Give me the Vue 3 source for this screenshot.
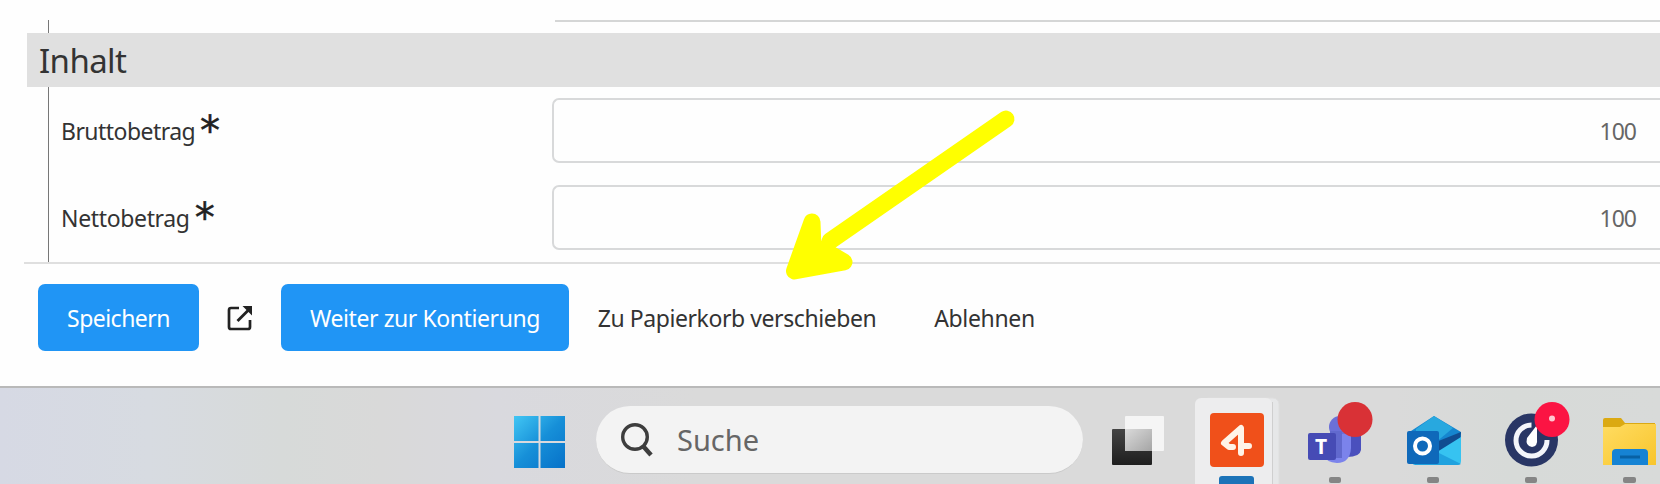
<template>
	<div class="screen">
		<main class="form">
			<div class="previous-row">
				<div class="previous-field"></div>
			</div>
			<h2 class="section-title"><span>Inhalt</span></h2>
			<div class="fields">
				<div class="field" v-for="item in fields" :key="item.label">
					<label class="label">
						<span :class="item.name">{{ item.label }}</span>
						<span class="required">*</span>
					</label>
					<div class="input"><span>{{ item.value }}</span></div>
				</div>
			</div>
			<footer class="actions">
				<button class="btn primary save"><span>Speichern</span></button>
				<button class="btn open">
					<svg width="28" height="28" viewBox="0 0 28 28">
						<path d="M13 4H5Q3 4 3 6V23Q3 25 5 25H22Q24 25 24 23V16" fill="none" stroke="#222" stroke-width="2.7" />
						<path d="M11.500 17L23 5.500" stroke="#222" stroke-width="2.800" />
						<path d="M16.500 2H26V11.500Z" fill="#222" />
					</svg>
				</button>
				<button class="btn primary next"><span>Weiter zur Kontierung</span></button>
				<button class="btn trash"><span>Zu Papierkorb verschieben</span></button>
				<button class="btn reject"><span>Ablehnen</span></button>
			</footer>
		</main>

		<nav class="taskbar">
			<svg class="start" width="53" height="54" viewBox="0 0 53 54">
				<defs>
					<linearGradient id="win" x1="0" y1="0" x2="53" y2="54" gradientUnits="userSpaceOnUse">
						<stop offset="0" stop-color="#43c8f5" />
						<stop offset="0.5" stop-color="#168fd8" />
						<stop offset="1" stop-color="#0670c8" />
					</linearGradient>
				</defs>
				<path d="M1 1H25.500V26H1ZM27.500 1H52V26H27.500ZM1 28H25.500V53H1ZM27.500 28H52V53H27.500Z" fill="url(#win)" />
			</svg>
			<div class="search">
				<svg width="34" height="36" viewBox="0 0 34 36">
					<circle cx="15" cy="15" r="12.300" fill="none" stroke="#3d3d3d" stroke-width="3.400" />
					<path d="M23 24L31 33" stroke="#3d3d3d" stroke-width="4.500" />
				</svg>
				<span>Suche</span>
			</div>
			<div class="apps">
				<svg class="app" viewBox="0 0 98 98">
					<defs>
						<linearGradient id="tv" x1="0" y1="0" x2="0" y2="1">
							<stop offset="0" stop-color="#444" />
							<stop offset="1" stop-color="#1e1e1e" />
						</linearGradient>
						<linearGradient id="glass" x1="0" y1="0" x2="1" y2="1">
							<stop offset="0" stop-color="#dadada" />
							<stop offset="1" stop-color="#a5a5a5" />
						</linearGradient>
					</defs>
					<rect x="35" y="30" width="39" height="35" rx="1" fill="#f5f5f5" />
					<rect x="22" y="43" width="40" height="36" rx="1" fill="url(#tv)" />
					<rect x="35" y="43" width="27" height="22" fill="url(#glass)" />
				</svg>

				<svg class="app" viewBox="0 0 98 98">
					<rect x="14" y="12" width="77" height="92" rx="6" fill="#e6e7e8" stroke="#dedede" />
					<rect x="7" y="12" width="77" height="92" rx="6" fill="#ededee" />
					<path d="M84.500 16V98" stroke="#cfcfcf" />
					<rect x="22" y="27" width="54" height="54" rx="4" fill="#f0501a" />
					<path class="four" d="M45 61L41 61L36 57L53 42V67M53 60H61" />
					<rect x="31" y="90" width="35" height="12" rx="3" fill="#1c73b8" />
				</svg>

				<svg class="app" viewBox="0 0 98 98">
					<circle cx="54" cy="41" r="11" fill="#6b70d8" />
					<path d="M61 46H75V64Q74 71 61 71Z" fill="#4a50bd" />
					<path d="M37 48H65V62Q64 77 51 77Q40 76 37 69Z" fill="#7b83eb" />
					<path d="M44 45H56V72H44Z" fill="#6169ce" />
					<rect x="22" y="47" width="28" height="27" rx="2" fill="#464bb5" />
					<text x="35" y="68" class="glyph" font-size="21">T</text>
					<circle cx="69" cy="33.500" r="17.500" fill="#d93136" />
					<rect class="running" x="43" y="91" width="12" height="6" rx="2" />
				</svg>

				<svg class="app" viewBox="0 0 98 98">
					<path d="M27 45L50 30L77 46V65H27Z" fill="#1686cf" />
					<path d="M32 43L50 30L69 42L51 57H32Z" fill="#28a8df" />
					<path d="M52 56L77 46L76 53L53 67Z" fill="#104d91" />
					<path d="M53 66L77 51V75Q77 79 73 79H31Q27 79 27 72H48Z" fill="#36c3f1" />
					<path d="M53 66L77 78Q75 79 73 79H31L27 74H48Z" fill="#20a2df" />
					<rect x="23" y="45" width="32" height="33" rx="2" fill="#0f69ba" />
					<circle cx="38.500" cy="60" r="7.500" fill="none" stroke="#fff" stroke-width="4" />
					<rect class="running" x="43" y="91" width="12" height="6" rx="2" />
				</svg>

				<svg class="app" viewBox="0 0 98 98">
					<circle cx="49.500" cy="54" r="26.500" fill="#293665" />
					<path d="M49.500 39A15.500 15.500 0 1 0 65 54" fill="none" stroke="#f4f5fa" stroke-width="5" />
					<path d="M55 39L45 52Q43 60 50 61Q56 60 55 53Z" fill="#fff" />
					<circle cx="70" cy="33.500" r="17.500" fill="#fb1443" />
					<circle cx="70" cy="32.500" r="3" fill="#ffc7d1" />
					<rect class="running" x="43" y="91" width="12" height="6" rx="2" />
				</svg>

				<svg class="app" viewBox="0 0 98 98">
					<defs>
						<linearGradient id="folder" x1="0" y1="0" x2="1" y2="1">
							<stop offset="0" stop-color="#ffdc61" />
							<stop offset="1" stop-color="#f8c52d" />
						</linearGradient>
					</defs>
					<path d="M23 34Q23 32 25 32H41L45 37H75V44H23Z" fill="#dba912" />
					<path d="M23 41H40L45 38H76V79H23Z" fill="url(#folder)" />
					<path d="M32 79V67Q32 63 36 63H64Q68 63 68 67V79Z" fill="#1683d4" />
					<path d="M40 71H60" stroke="#0861a5" stroke-width="3" />
					<rect class="running" x="43" y="91" width="13" height="6" rx="2" />
				</svg>
			</div>
		</nav>

		<!-- yellow marker arrow pointing at the trash action -->
		<svg class="arrow" width="240" height="180" viewBox="0 0 240 180">
			<path d="M222 15L46 137" />
			<path d="M28 118L10.500 167L60 158L38 145L29 145Z" class="head" />
		</svg>
	</div>
</template>

<script setup>
const fields = [
	{ name: "gross", label: "Bruttobetrag", value: "100" },
	{ name: "net", label: "Nettobetrag", value: "100" },
];
</script>

<style>
body {
	margin: 0;
	overflow: hidden;
}
</style>

<style scoped>
.screen {
	position: relative;
	width: 1660px;
	height: 484px;
	overflow: hidden;
	background: #fefefe;
	color: #333;
	font-family: "Noto Sans", "Open Sans", sans-serif;
}
.screen * {
	box-sizing: border-box;
}
.form {
	display: flow-root;
	height: 386px;
}
.previous-row {
	height: 13px;
	margin: 20px 0 0 48px;
	padding-left: 506px;
	border-left: 1px solid #777;
}
.previous-field {
	height: 2px;
	background: #d5d6d6;
}
.section-title {
	height: 54px;
	margin: 0 0 0 27px;
	padding-left: 12px;
	background: #e0e0e0;
	font-size: 33px;
	font-weight: 400;
	line-height: 55px;
	letter-spacing: -0.600px;
}
.fields {
	display: flex;
	flex-direction: column;
	gap: 22px;
	height: 175px;
	margin-left: 48px;
	padding-top: 11px;
	border-left: 1px solid #777;
}
.field {
	display: flex;
	height: 65px;
	flex: none;
}
.label {
	display: flex;
	align-items: center;
	width: 503px;
	padding-left: 12px;
	font-size: 23px;
}
.gross {
	letter-spacing: -0.550px;
}
.net {
	letter-spacing: -0.350px;
}
.required {
	margin: 0 0 0 5px;
	font-family: "DejaVu Sans", sans-serif;
	font-size: 40px;
	line-height: 40px;
	color: #222;
	-webkit-text-stroke: 0.500px #222;
}
.input {
	display: flex;
	flex: 1;
	align-items: center;
	justify-content: flex-end;
	padding-right: 24px;
	border: 2px solid #d8d9da;
	border-right: 0;
	border-radius: 7px 0 0 7px;
	font-size: 23px;
	letter-spacing: -1px;
	color: #666;
}
.actions {
	display: flex;
	height: 124px;
	margin-left: 24px;
	padding: 20px 0 0 14px;
	border-top: 2px solid #dfdfdf;
}
.btn {
	height: 67px;
	padding: 0;
	border: 0;
	border-radius: 7px;
	background: none;
	color: #333;
	font-family: inherit;
	font-size: 23px;
	letter-spacing: -0.420px;
	white-space: nowrap;
}
.primary {
	background: #2095f5;
	color: #fff;
}
.save {
	width: 161px;
	letter-spacing: -0.530px;
}
.open {
	display: grid;
	place-items: center;
	width: 82px;
}
.next {
	width: 288px;
}
.trash {
	width: 336px;
}
.reject {
	width: 159px;
	letter-spacing: -0.340px;
}
.taskbar {
	display: flex;
	height: 98px;
	padding-left: 513px;
	border-top: 2px solid #b9b9b9;
	background: linear-gradient(90deg, #d6d9e4 0, #d7dbe1 9%, #d7dad9 17%, #d9d9d9 23%, #d9d9de 30%, #dadada 42%, #dadada 84%, #d7dad8 91%, #d8dad9 100%);
}
.start {
	margin-top: 27px;
	flex: none;
}
.search {
	display: flex;
	align-items: center;
	flex: none;
	width: 487px;
	height: 68px;
	margin: 18px 0 0 30px;
	padding-left: 24px;
	gap: 23px;
	border-radius: 34px;
	border-bottom: 1px solid #cacaca;
	background: #f3f3f3;
	color: #666;
	font-size: 29px;
}
.apps {
	display: flex;
	margin: -2px 0 0 7px;
}
.app {
	flex: none;
	width: 98px;
	height: 98px;
}
.glyph {
	fill: #fff;
	font-weight: 700;
	text-anchor: middle;
}
.four {
	fill: none;
	stroke: #fff4e8;
	stroke-width: 6px;
	stroke-linecap: round;
	stroke-linejoin: round;
}
.running {
	fill: #858585;
}
.arrow {
	position: absolute;
	top: 104px;
	left: 784px;
	fill: none;
	stroke: #ff0;
	stroke-width: 17px;
	stroke-linecap: round;
	stroke-linejoin: round;
}
.head {
	fill: #ff0;
}
</style>
